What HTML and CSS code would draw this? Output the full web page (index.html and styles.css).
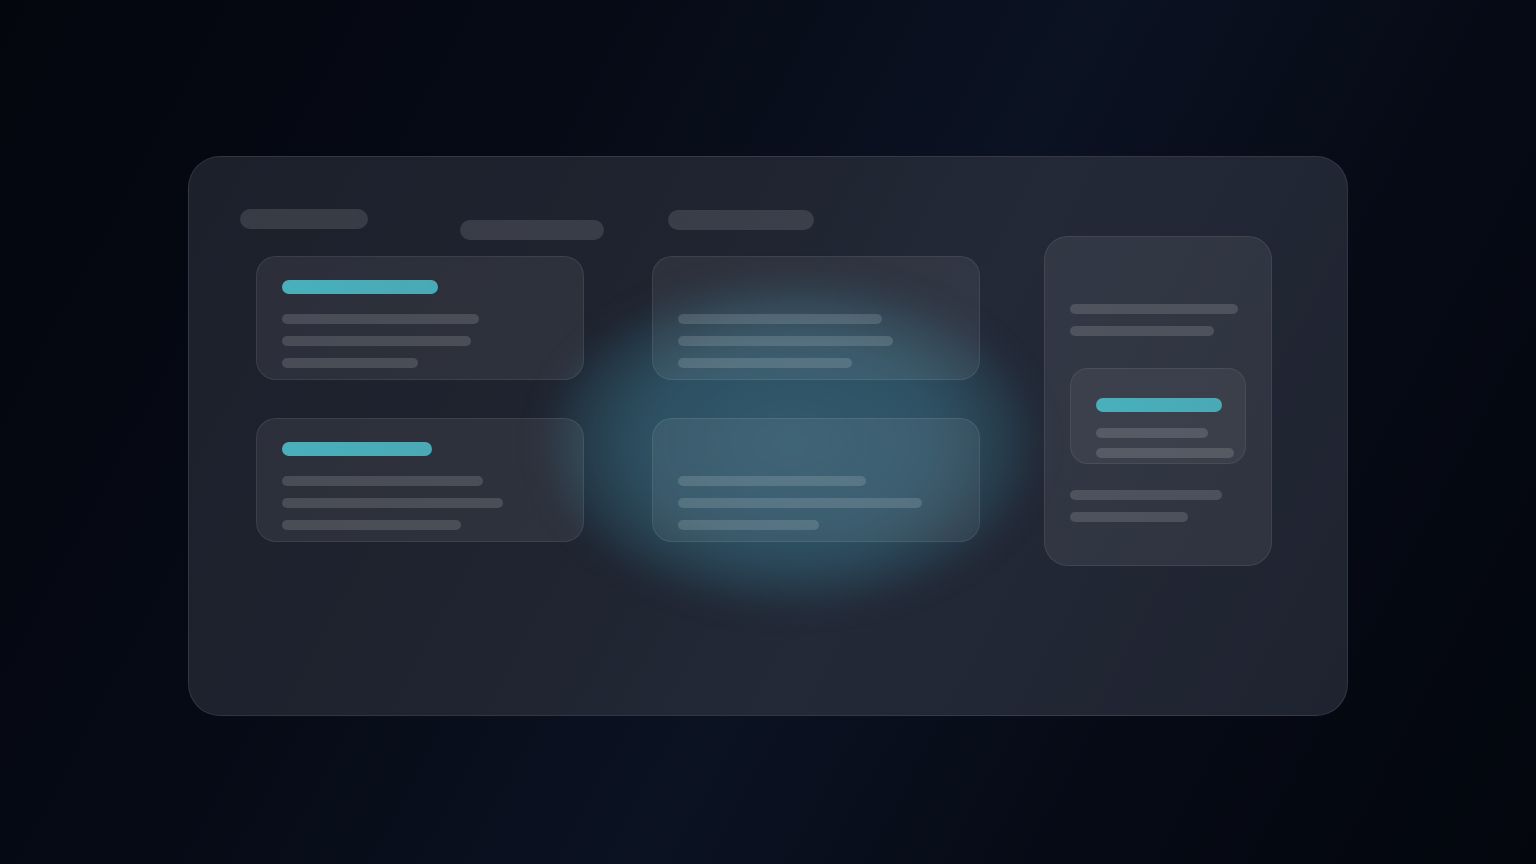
FILE: index.html
```html
<!DOCTYPE html>
<html lang="en">
<head>
<meta charset="utf-8">
<title>Board skeleton</title>
<link rel="stylesheet" href="styles.css">
</head>
<body>
<div class="stage">
  <section class="panel">
    <div class="glow"></div>
    <div class="board">
      <div class="heads">
        <span class="pill pill-a"></span>
        <span class="pill pill-b"></span>
        <span class="pill pill-c"></span>
      </div>
      <div class="cards">
        <div class="card">
          <span class="accent" style="width:156px"></span>
          <span class="line first" style="width:197px"></span>
          <span class="line" style="width:189px"></span>
          <span class="line" style="width:136px"></span>
        </div>
        <div class="card">
          <span class="accent hidden" style="width:156px"></span>
          <span class="line first" style="width:204px"></span>
          <span class="line" style="width:215px"></span>
          <span class="line" style="width:174px"></span>
        </div>
        <div class="card">
          <span class="accent" style="width:150px"></span>
          <span class="line first" style="width:201px"></span>
          <span class="line" style="width:221px"></span>
          <span class="line" style="width:179px"></span>
        </div>
        <div class="card">
          <span class="accent hidden" style="width:150px"></span>
          <span class="line first" style="width:188px"></span>
          <span class="line" style="width:244px"></span>
          <span class="line" style="width:141px"></span>
        </div>
      </div>
    </div>
    <aside class="side">
      <span class="line" style="width:168px"></span>
      <span class="line" style="width:144px"></span>
      <div class="inner">
        <span class="accent" style="width:126px"></span>
        <span class="line i1" style="width:112px"></span>
        <span class="line i2" style="width:138px"></span>
      </div>
      <span class="line after" style="width:152px"></span>
      <span class="line" style="width:118px"></span>
    </aside>
  </section>
</div>
</body>
</html>
```
FILE: styles.css
```css
* { box-sizing: border-box; }
html, body { margin: 0; height: 100%; }
body {
  width: 1536px;
  height: 864px;
  overflow: hidden;
  font-family: "Inter", "Liberation Sans", sans-serif;
  background: linear-gradient(118deg, #04060e 0%, #060a15 30%, #0b1222 55%, #060a15 76%, #03060d 100%);
}
.stage {
  padding-top: 156px;
}
.panel {
  position: relative;
  width: 1160px;
  height: 560px;
  margin: 0 auto;
  border-radius: 32px;
  border: 1px solid rgba(255,255,255,0.09);
  background: linear-gradient(118deg, #1c202b 0%, #1f2430 40%, #232937 60%, #1f2330 100%);
  padding: 52px 0 0 51px;
  display: flex;
  align-items: flex-start;
  overflow: hidden;
}
.glow {
  position: absolute;
  left: 350px;
  top: 118px;
  width: 504px;
  height: 336px;
  border-radius: 50%;
  background: radial-gradient(closest-side, rgba(62,122,146,0.62) 0%, rgba(56,114,136,0.56) 60%, rgba(48,100,120,0.32) 86%, rgba(40,80,100,0) 100%);
  filter: blur(14px);
  z-index: 0;
}
.board, .side { position: relative; z-index: 1; }
.board { width: 740px; }
.heads {
  display: flex;
  align-items: flex-start;
  height: 31px;
}
.pill {
  display: block;
  height: 20px;
  border-radius: 10px;
  background: rgba(255,255,255,0.12);
}
.pill-a { width: 128px; }
.pill-b { width: 144px; margin-left: 92px; margin-top: 11px; }
.pill-c { width: 146px; margin-left: 64px; margin-top: 1px; }
.cards {
  margin-top: 16px;
  margin-left: 16px;
  display: grid;
  grid-template-columns: 328px 328px;
  grid-template-rows: 124px 124px;
  column-gap: 68px;
  row-gap: 38px;
}
.card {
  border-radius: 20px;
  border: 1px solid rgba(255,255,255,0.08);
  background: rgba(255,255,255,0.065);
  padding: 23px 0 0 25px;
  display: flex;
  flex-direction: column;
  align-items: flex-start;
}
.accent {
  display: block;
  height: 14px;
  border-radius: 7px;
  background: linear-gradient(90deg, #48b0bc, #4aa9b4);
}
.accent.hidden { visibility: hidden; }
.line {
  display: block;
  height: 10px;
  border-radius: 5px;
  background: rgba(255,255,255,0.14);
  margin-top: 12px;
}
.card .line.first { margin-top: 20px; }
.side {
  margin-left: 64px;
  margin-top: 27px;
  width: 228px;
  height: 330px;
  border-radius: 24px;
  border: 1px solid rgba(255,255,255,0.08);
  background: rgba(255,255,255,0.07);
  padding: 67px 0 0 25px;
  display: flex;
  flex-direction: column;
  align-items: flex-start;
}
.side > .line:first-child { margin-top: 0; }
.inner {
  margin-top: 32px;
  width: 176px;
  height: 96px;
  border-radius: 18px;
  border: 1px solid rgba(255,255,255,0.07);
  background: rgba(255,255,255,0.05);
  padding: 29px 0 0 25px;
  display: flex;
  flex-direction: column;
  align-items: flex-start;
}
.inner .i1 { margin-top: 16px; }
.inner .i2 { margin-top: 10px; }
.side .after { margin-top: 26px; }
```
